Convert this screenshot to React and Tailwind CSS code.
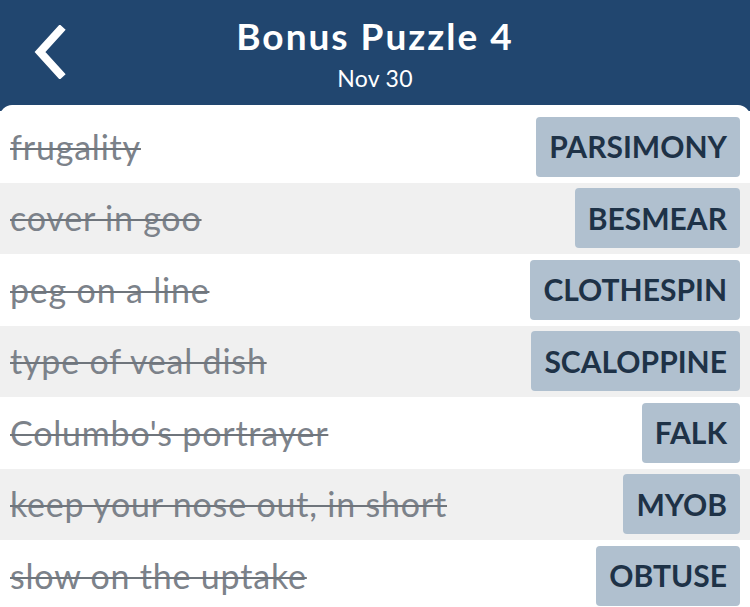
import React from "react";

const clues = [
  { clue: "frugality", answer: "PARSIMONY" },
  { clue: "cover in goo", answer: "BESMEAR" },
  { clue: "peg on a line", answer: "CLOTHESPIN" },
  { clue: "type of veal dish", answer: "SCALOPPINE" },
  { clue: "Columbo's portrayer", answer: "FALK" },
  { clue: "keep your nose out, in short", answer: "MYOB" },
  { clue: "slow on the uptake", answer: "OBTUSE" },
];

const Row = ({ clue, answer, shaded }) => (
  <div
    className={
      "flex h-[71.5px] shrink-0 items-center justify-between pl-[10px] pr-[10px] " +
      (shaded ? "bg-[#f0f0f0]" : "bg-white")
    }
  >
    <span className="text-[34px] leading-none tracking-[0.8px] text-[#7c828a] line-through decoration-[#6f757c] decoration-2">
      {clue}
    </span>
    <span className="flex h-[60px] items-center rounded-[4px] bg-[#b0c0cf] px-[13px] text-[30px] font-bold text-[#1e3247]">
      {answer}
    </span>
  </div>
);

export default function App() {
  return (
    <div
      className="flex h-[607px] w-[750px] flex-col overflow-hidden bg-[#21466f]"
      style={{ fontFamily: "Lato, 'Open Sans', sans-serif" }}
    >
      <header className="relative flex h-[105px] shrink-0 flex-col items-center pt-[13px] text-white">
        <button className="absolute left-[31px] top-[25px]">
          <svg width="38" height="54" viewBox="0 0 38 54" fill="none">
            <path
              d="M29 5 L9 27 L29 49"
              stroke="white"
              strokeWidth="8"
              strokeLinecap="square"
            />
          </svg>
        </button>
        <h1 className="text-[37px] font-bold leading-[46px] tracking-[2px]">Bonus Puzzle 4</h1>
        <div className="mt-[6px] text-[23px] leading-[26px] tracking-[0.3px]">Nov 30</div>
      </header>
      <main className="flex flex-1 flex-col rounded-t-[12px] bg-white pt-[6px]">
        {clues.map((c, i) => (
          <Row key={c.answer} {...c} shaded={i % 2 === 1} />
        ))}
      </main>
    </div>
  );
}
